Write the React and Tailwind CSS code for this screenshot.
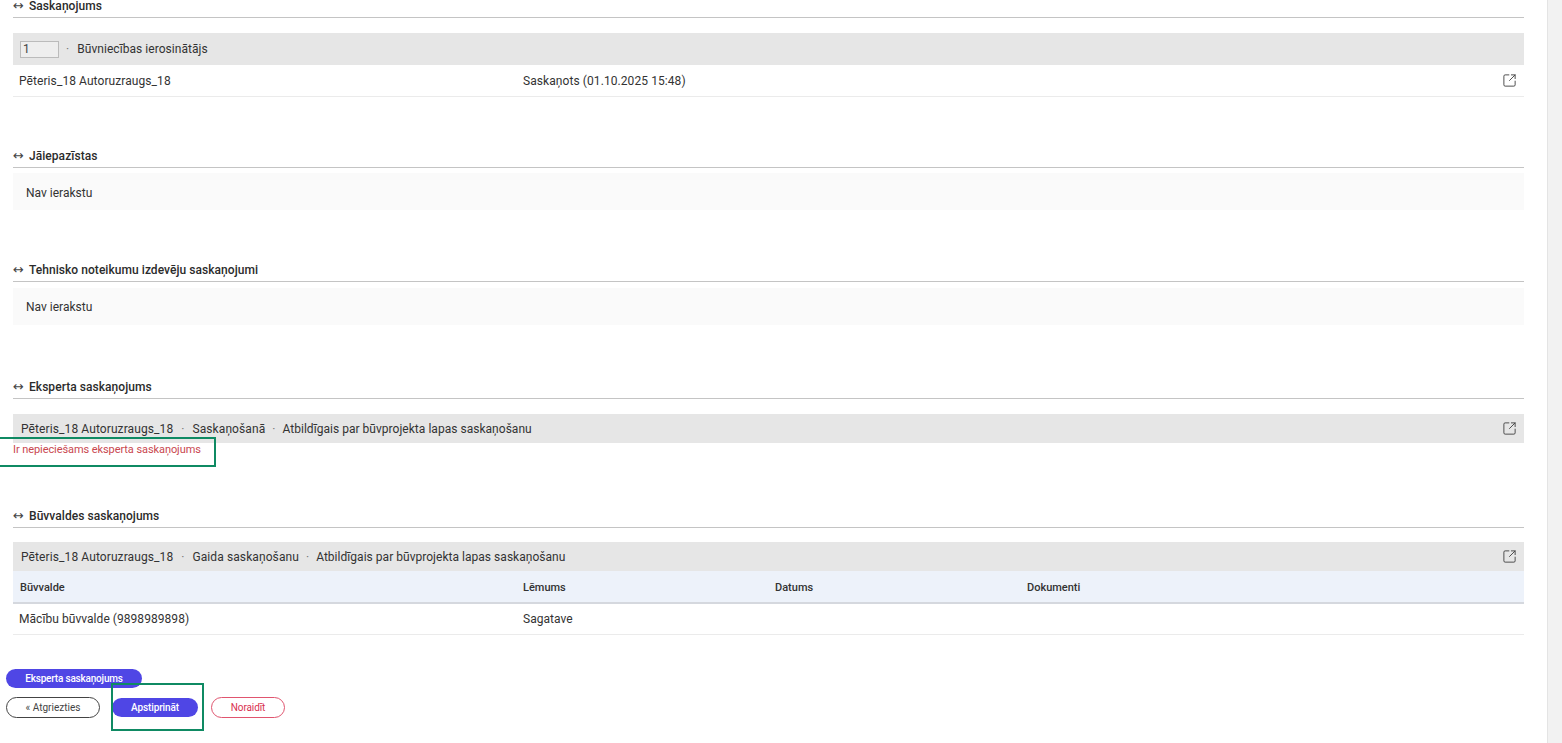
import React from "react";
import { SquareArrowOutUpRight } from "lucide-react";

const Heading = ({ title, className }) => (
  <div className={`flex h-[18px] items-center border-b border-[#c4c4c4] pb-[6px] ${className}`}>
    <span className="w-[16px] font-['DejaVu_Sans',sans-serif] text-[13px] leading-none text-[#444]">↔</span>
    <span className="text-[12px] font-medium tracking-[0.05px] text-[#2b2b2b]">{title}</span>
  </div>
);

const Empty = ({ className = "mt-[5px] pt-[2px]" }) => (
  <div className={`${className} flex h-[37px] items-center bg-[#fafafa] pl-[13px] text-[12px] text-[#333]`}>
    Nav ierakstu
  </div>
);

const LinkIcon = () => (
  <SquareArrowOutUpRight size={15} strokeWidth={1.5} className="text-[#444]" />
);

const GrayBar = ({ name, status, role, className }) => (
  <div className={`${className} flex h-[29px] items-center justify-between bg-[#e6e6e6] pl-[8px] pr-[7px] text-[12px] text-[#333]`}>
    <div>
      <span className="tracking-[0.1px]">{name}</span>
      <span className="px-[8px] text-[#777]">·</span>
      <span className="tracking-[0.1px]">{status}</span>
      <span className="px-[7px] text-[#777]">·</span>
      <span className="tracking-[0.03px]">{role}</span>
    </div>
    <LinkIcon />
  </div>
);

const App = () => {
  return (
    <div className="flex h-[743px] w-[1562px] overflow-hidden bg-white font-['Roboto',sans-serif]">
      <main className="relative w-[1547px] pl-[13px] pr-[23px]">
        <Heading title="Saskaņojums" />

        <div className="mt-[15px] flex h-[32px] items-center bg-[#e6e6e6] pl-[7px] text-[12px] tracking-[0.05px] text-[#333]">
          <span className="flex h-[17px] w-[39px] items-center border border-[#bbb] bg-[#eee] pl-[2px] text-[#444]">
            1
          </span>
          <span className="pl-[7px] pr-[8px] text-[#777]">·</span>
          <span>Būvniecības ierosinātājs</span>
        </div>
        <div className="flex h-[32px] items-center justify-between border-b border-[#ebebeb] pl-[6px] pr-[7px] text-[12px] tracking-[0.08px] text-[#333]">
          <div className="grid grid-cols-[504px_1fr]">
            <span>Pēteris_18 Autoruzraugs_18</span>
            <span>Saskaņots (01.10.2025 15:48)</span>
          </div>
          <LinkIcon />
        </div>

        <Heading title="Jāiepazīstas" className="mt-[53px]" />
        <Empty />

        <Heading title="Tehnisko noteikumu izdevēju saskaņojumi" className="mt-[54px]" />
        <Empty className="mt-[6px]" />

        <Heading title="Eksperta saskaņojums" className="mt-[56px]" />
        <GrayBar
          className="mt-[15px]"
          name="Pēteris_18 Autoruzraugs_18"
          status="Saskaņošanā"
          role="Atbildīgais par būvprojekta lapas saskaņošanu"
        />
        <p className="h-[14px] text-[11px] leading-[14px] tracking-[-0.08px] text-[#c9474f]">
          Ir nepieciešams eksperta saskaņojums
        </p>

        <Heading title="Būvvaldes saskaņojums" className="mt-[53px]" />
        <GrayBar
          className="mt-[14px]"
          name="Pēteris_18 Autoruzraugs_18"
          status="Gaida saskaņošanu"
          role="Atbildīgais par būvprojekta lapas saskaņošanu"
        />
        <div className="grid h-[33px] grid-cols-[503px_252px_252px_1fr] items-center border-b-2 border-[#d5d8de] bg-[#edf2fa] pl-[7px] pt-[3px] text-[11px] font-medium text-[#333]">
          <span>Būvvalde</span>
          <span>Lēmums</span>
          <span>Datums</span>
          <span>Dokumenti</span>
        </div>
        <div className="grid h-[31px] grid-cols-[504px_1fr] items-center border-b border-[#ebebeb] pl-[6px] text-[12px] tracking-[0.05px] text-[#333]">
          <span>Mācību būvvalde (9898989898)</span>
          <span>Sagatave</span>
        </div>

        <div className="-ml-[7px] mt-[34px] flex flex-col items-start gap-[9px]">
          <button className="h-[19px] w-[136px] rounded-full bg-[#4f46e5] pb-[1px] text-[10px] font-medium tracking-[-0.2px] text-white">
            Eksperta saskaņojums
          </button>
          <div className="flex items-center">
            <button className="h-[21px] w-[94px] rounded-full border border-[#444] bg-white text-[10px] text-[#444]">
              « Atgriezties
            </button>
            <button className="ml-[12px] h-[19px] w-[86px] rounded-full bg-[#4f46e5] text-[10px] font-medium tracking-[-0.1px] text-white">
              Apstiprināt
            </button>
            <button className="ml-[13px] h-[21px] w-[74px] rounded-full border border-[#e0556f] bg-white text-[10px] tracking-[-0.1px] text-[#d9304f]">
              Noraidīt
            </button>
          </div>
        </div>

        {/* annotation frames drawn over the screenshot */}
        <div className="absolute -left-[2px] top-[437px] h-[30px] w-[218px] border-2 border-[#0f8a63]" />
        <div className="absolute left-[111px] top-[683px] h-[48px] w-[93px] border-2 border-[#0f8a63]" />
      </main>
      <aside className="w-[15px] border-l border-[#e4e4e4] bg-[#f2f2f2]" />
    </div>
  );
};

export default App;
